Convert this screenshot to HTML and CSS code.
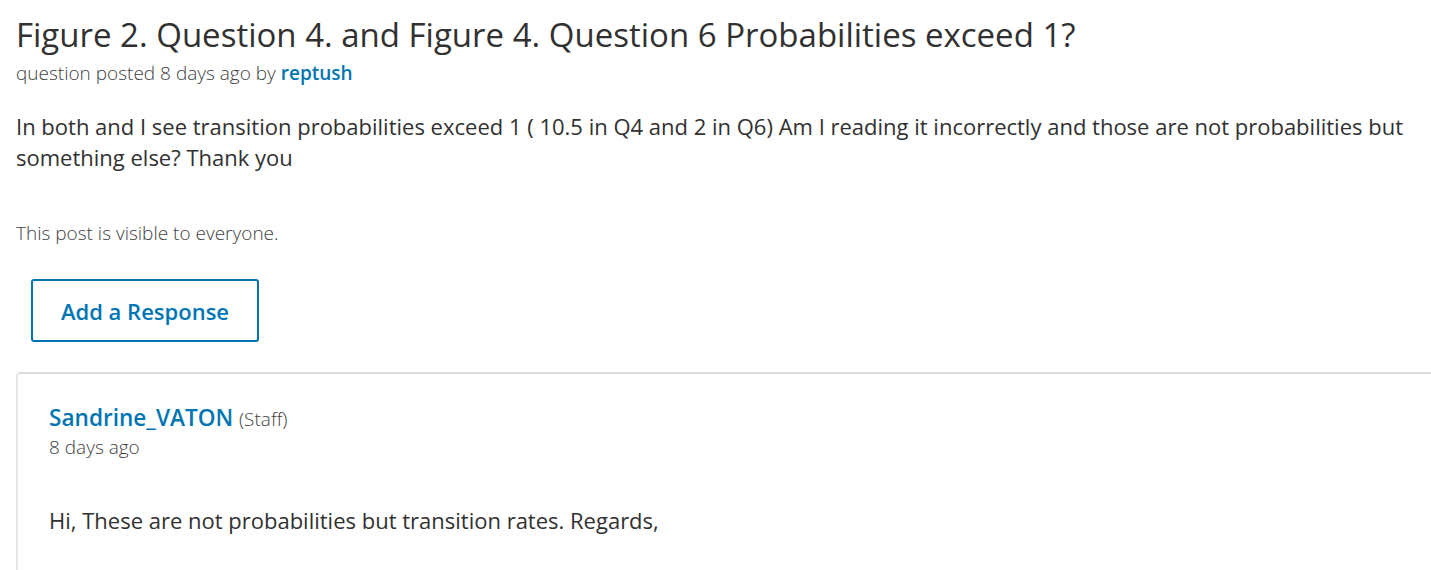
FILE: index.html
```html
<!DOCTYPE html>
<html>
<head>
<meta charset="utf-8">
<link rel="stylesheet" href="styles.css">
</head>
<body>
<main class="page">
  <header class="post-header">
    <h1 class="post-title">Figure 2. Question 4. and Figure 4. Question 6 Probabilities exceed 1?</h1>
    <p class="post-meta">question posted 8 days ago by <a class="author" href="#">reptush</a></p>
  </header>
  <div class="post-body">
    <p>In both and I see transition probabilities exceed 1 ( 10.5 in Q4 and 2 in Q6) Am I reading it incorrectly and those are not probabilities but something else? Thank you</p>
  </div>
  <p class="visibility">This post is visible to everyone.</p>
  <div class="actions">
    <button class="btn-response">Add a Response</button>
  </div>
  <section class="response">
    <div class="response-meta">
      <div class="response-author"><a class="author-name" href="#">Sandrine_VATON</a> <span class="role">(Staff)</span></div>
      <div class="response-date">8 days ago</div>
    </div>
    <div class="response-body">
      <p>Hi, These are not probabilities but transition rates. Regards,</p>
    </div>
  </section>
</main>
</body>
</html>
```

FILE: styles.css
```css
html, body {
  margin: 0;
  padding: 0;
  background: #fff;
}
body {
  font-family: "Open Sans", "Liberation Sans", sans-serif;
  color: #313131;
  overflow: hidden;
}
.page {
  padding: 15px 0 0 16px;
}
.post-title {
  margin: 0;
  font-size: 33px;
  font-weight: 400;
  line-height: 40px;
  color: #313131;
}
.post-meta {
  margin: 4px 0 0 0;
  font-size: 19px;
  font-weight: 300;
  line-height: 28px;
  color: #414141;
}
.author {
  color: #0075b4;
  font-weight: 600;
  text-decoration: none;
}
.post-body p {
  margin: 24px 0 0 0;
  font-size: 22px;
  line-height: 31px;
  color: #313131;
  max-width: 1405px;
}
.visibility {
  margin: 46px 0 0 0;
  font-size: 19px;
  font-weight: 300;
  line-height: 28px;
  color: #414141;
}
.actions {
  padding: 32px 0 0 15px;
}
.btn-response {
  display: block;
  font-family: inherit;
  font-size: 22px;
  font-weight: 600;
  color: #0075b4;
  background: #fff;
  border: 2px solid #0075b4;
  border-radius: 3px;
  width: 228px;
  height: 63px;
  padding: 0;
  cursor: pointer;
}
.response {
  margin-top: 30px;
  margin-right: -20px;
  border-top: 2px solid #ddd;
  border-left: 2px solid #e6e6e6;
  border-top-left-radius: 4px;
  padding: 29px 0 40px 31px;
  min-height: 200px;
}
.response-author {
  font-size: 22px;
  line-height: 28px;
}
.author-name {
  color: #0075b4;
  font-weight: 600;
  font-size: 22.6px;
  text-decoration: none;
}
.role {
  font-size: 19px;
  font-weight: 300;
  color: #414141;
}
.response-date {
  font-size: 19px;
  font-weight: 300;
  line-height: 28px;
  color: #414141;
}
.response-body p {
  margin: 44px 0 0 0;
  font-size: 22px;
  line-height: 31px;
  color: #313131;
}
```
